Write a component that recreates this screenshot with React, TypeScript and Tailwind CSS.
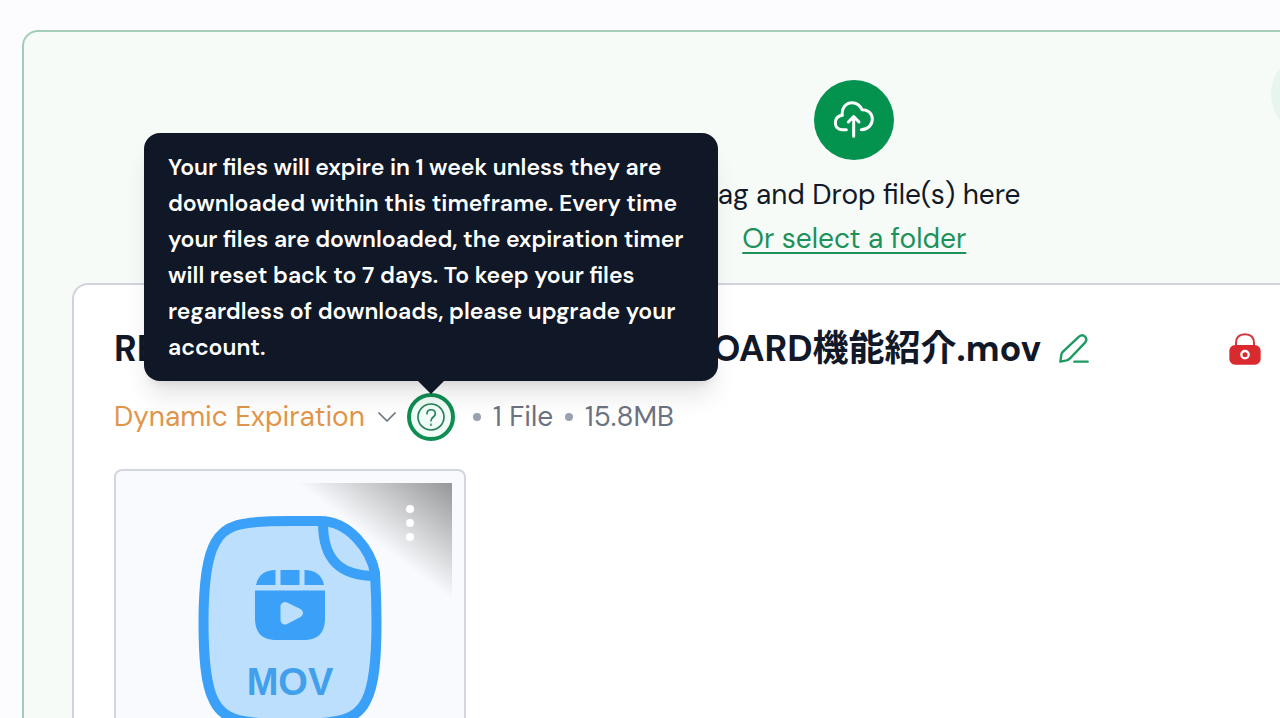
import React, { useState } from 'react';

const TOOLTIP_LINES = [
  'Your files will expire in 1 week unless they are',
  'downloaded within this timeframe. Every time',
  'your files are downloaded, the expiration timer',
  'will reset back to 7 days. To keep your files',
  'regardless of downloads, please upgrade your',
  'account.',
];

function CloudUploadIcon() {
  return (
    <svg className="w-10 h-10" viewBox="0 0 120 120" fill="none" stroke="currentColor" strokeWidth="9" strokeLinecap="round" strokeLinejoin="round" aria-hidden="true">
      <path d="M37 89H24C12 89 4 80 4 69C4 57 12 48 25 46C22 25 35 8 54 8C68 8 78 16 84 29C101 28 115 40 115 57C115 74 103 88 82 89" />
      <path d="M59 109V51M43 66L59 50L75 66" />
    </svg>
  );
}

function PencilIcon() {
  return (
    <svg className="w-[30px] h-[30px]" viewBox="0 0 90 90" fill="none" stroke="currentColor" strokeWidth="7" strokeLinecap="round" strokeLinejoin="round" aria-hidden="true">
      <path d="M4 83L7 62C8 58 9 56 12 53L60 8C66 3 73 3 78 8C83 13 83 20 78 26L33 73C30 76 27 78 23 79Z" />
      <path d="M46 83H86" />
    </svg>
  );
}

function LockIcon() {
  return (
    <svg className="w-8 h-8" viewBox="0 0 96 96" fill="none" aria-hidden="true">
      <path d="M21 42V31C21 13 31 4 48 4C65 4 75 13 75 31V42" stroke="#cf3a3f" strokeWidth="6" />
      <rect x="1" y="36" width="94" height="59" rx="17" fill="#d92b2f" />
      <circle cx="48" cy="65" r="11" stroke="#fff" strokeWidth="7" />
    </svg>
  );
}

function QuestionIcon() {
  return (
    <svg className="w-7 h-7" viewBox="0 0 84 84" fill="none" stroke="currentColor" strokeWidth="5" strokeLinecap="round" aria-hidden="true">
      <circle cx="42" cy="42" r="39" />
      <path d="M30 32C30 17 55 16 55 32C55 42 42 42 42 53" />
      <circle cx="42" cy="65" r="1" />
    </svg>
  );
}

function MovFileIcon() {
  return (
    <svg className="w-[184px] h-[215px]" viewBox="0 0 184 215" fill="none" role="img" aria-label="MOV">
      <path
        d="M92 6C40 6 27 10 17 28C8 44 5.5 75 5.5 107C5.5 139 7 169 16 186C25 204 40 209 92 209C144 209 159 204 168 186C177 169 178.5 139 178.5 107C178.5 90 178 75 177 58C173 36 152 6 122 6Z"
        fill="#bbdffd"
        stroke="#3ba1f8"
        strokeWidth="10"
      />
      <path d="M125 8C125 44 141 61 177 61" stroke="#3ba1f8" strokeWidth="10" />
      <g fill="#3ba1f8">
        <path d="M77.5 55C67 55 60 60 58 70H77.5Z" />
        <path d="M82.5 55H101.5V70H82.5Z" />
        <path d="M106.5 55C117 55 124 60 126 70H106.5Z" />
        <path d="M57 75.5H127V103C127 118 120 125 105 125H79C64 125 57 118 57 103Z" />
      </g>
      <path d="M87 91.5V105L100.500 98Z" fill="#bbdffd" stroke="#bbdffd" strokeWidth="9" strokeLinejoin="round" />
      <text x="92" y="180" textAnchor="middle" fill="#429fec" className="font-['Liberation_Sans',sans-serif] font-bold text-[38px]">
        MOV
      </text>
    </svg>
  );
}

function Dot() {
  return <span className="w-2 h-2 rounded-full bg-[#9aa2b0]" />;
}

function ExpirationTooltip() {
  return (
    <div
      id="expiration-tooltip"
      role="tooltip"
      className="absolute z-10 bottom-full left-1/2 -translate-x-1/2 mb-3 px-6 py-4 w-[574px] rounded-2xl bg-[#101726] text-white text-[23px] leading-9 font-semibold text-left whitespace-nowrap shadow-xl"
    >
      {TOOLTIP_LINES.map((line) => (
        <span key={line} className="block">{line}</span>
      ))}
      <svg className="absolute top-full left-1/2 -translate-x-1/2 w-[26px] h-[13px]" viewBox="0 0 26 13" aria-hidden="true">
        <path d="M0 0H26L13 13Z" fill="#101726" />
      </svg>
    </div>
  );
}

function FileThumbnail() {
  return (
    <div className="relative mt-7 w-[352px] rounded-lg border-2 border-[#d3d5df] bg-[#f9fafd] p-3">
      <div className="flex justify-center pt-8 pb-8">
        <MovFileIcon />
      </div>
      <div className="absolute top-3 right-3 w-[162px] h-[122px] bg-linear-to-tr from-transparent from-52% to-black/40">
        <button
          type="button"
          aria-label="File options"
          className="ml-auto mr-6 mt-4 w-9 h-12 flex flex-col items-center justify-center gap-[6px] cursor-pointer"
        >
          <span className="w-2 h-2 rounded-full bg-white" />
          <span className="w-2 h-2 rounded-full bg-white" />
          <span className="w-2 h-2 rounded-full bg-white" />
        </button>
      </div>
    </div>
  );
}

export default function App() {
  const [expiration, setExpiration] = useState('dynamic');

  return (
    <div className="h-screen overflow-hidden bg-[#fcfcff] pl-[22px] pt-[30px] font-['DM_Sans',Inter,'Noto_Sans_CJK_JP',sans-serif] text-[#111827]">
      <main className="relative w-[calc(132%+4px)] min-h-screen rounded-2xl border-2 border-[#a3cdb8] bg-[#f6fbf8] px-12 pt-12">
        <span className="absolute top-5 left-[75%] ml-0.5 w-[84px] h-[84px] rounded-full bg-[#e7f5ee]" />

        {/* Drop area */}
        <section className="flex flex-col items-center text-[28px] leading-[44px]">
          <button
            type="button"
            aria-label="Upload files"
            className="w-20 h-20 mb-[13px] rounded-full bg-[#04924f] text-white flex items-center justify-center cursor-pointer"
          >
            <CloudUploadIcon />
          </button>
          <p>Drag and Drop file(s) here</p>
          <a href="#folder" className="text-[#1c9159] underline decoration-2 underline-offset-4">Or select a folder</a>
        </section>

        {/* File card */}
        <section className="mt-[22px] min-h-screen rounded-2xl border-2 border-[#d0d3dc] bg-white px-10 pt-10">
          <div className="flex items-center w-[77.5%]">
            <h1 className="flex justify-between w-[927px] text-[36px] leading-[48px] font-bold whitespace-nowrap">
              <span>RE</span>
              <span>OARD機能紹介.mov</span>
            </h1>
            <button type="button" aria-label="Rename" className="ml-[18px] text-[#1b9b61] cursor-pointer">
              <PencilIcon />
            </button>
            <button type="button" aria-label="Password protection" className="ml-auto cursor-pointer">
              <LockIcon />
            </button>
          </div>

          <div className="mt-5 flex items-center text-[28px] leading-[48px] text-[#6b7280]">
            <div className="relative flex items-center w-[282px]">
              <select
                aria-label="Expiration"
                value={expiration}
                onChange={(e) => setExpiration(e.target.value)}
                className="w-full h-12 appearance-none bg-transparent text-[#e0954a] cursor-pointer"
              >
                <option value="dynamic">Dynamic Expiration</option>
              </select>
              <svg className="absolute right-0 w-[18px] h-[10px] pointer-events-none" viewBox="0 0 18 10" fill="none" stroke="#6b7280" strokeWidth="1.7" strokeLinecap="round" strokeLinejoin="round" aria-hidden="true">
                <path d="M1 1L9 9L17 1" />
              </svg>
            </div>
            <div className="relative ml-[11px]">
              <button
                type="button"
                aria-label="About expiration"
                aria-describedby="expiration-tooltip"
                className="w-12 h-12 rounded-full border-4 border-[#0f8d53] bg-[#f1fdf7] text-[#27805a] flex items-center justify-center cursor-pointer"
              >
                <QuestionIcon />
              </button>
              <ExpirationTooltip />
            </div>
            <div className="ml-[18px] flex items-center gap-3">
              <Dot />
              <span>1 File</span>
              <Dot />
              <span>15.8MB</span>
            </div>
          </div>

          <FileThumbnail />
        </section>
      </main>
    </div>
  );
}
